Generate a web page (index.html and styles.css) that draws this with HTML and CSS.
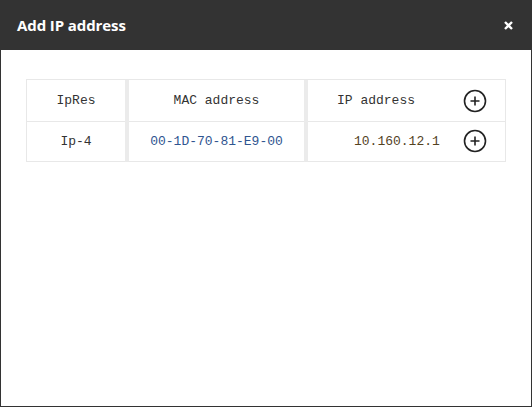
FILE: index.html
```html
<!DOCTYPE html>
<html>
<head>
<meta charset="utf-8">
<link rel="stylesheet" href="styles.css">
</head>
<body>
<div class="dialog">
  <div class="header">
    <span class="title">Add IP address</span>
    <svg class="close" width="9" height="9" viewBox="0 0 9 9"><path d="M1 1 L8 8 M8 1 L1 8" stroke="#fff" stroke-width="2.4" stroke-linecap="butt"/></svg>
  </div>
  <div class="body">
    <div class="grid">
      <div class="cell c1 head">IpRes</div>
      <div class="cell c2 head">MAC address</div>
      <div class="cell c3 head"><span class="ip-head">IP address</span><svg class="plus" width="24" height="24" viewBox="0 0 24 24"><circle cx="12" cy="12" r="10.5" fill="none" stroke="#222" stroke-width="1.6"/><path d="M12 7.5 V16.5 M7.5 12 H16.5" stroke="#222" stroke-width="1.6"/></svg></div>
      <div class="cell c1 row">Ip-4</div>
      <div class="cell c2 row mac">00-1D-70-81-E9-00</div>
      <div class="cell c3 row"><span class="ip-val">10.160.12.1</span><svg class="plus" width="24" height="24" viewBox="0 0 24 24"><circle cx="12" cy="12" r="10.5" fill="none" stroke="#222" stroke-width="1.6"/><path d="M12 7.5 V16.5 M7.5 12 H16.5" stroke="#222" stroke-width="1.6"/></svg></div>
    </div>
  </div>
</div>
</body>
</html>
```
FILE: styles.css
```css
html, body { margin: 0; padding: 0; background: #fff; }
.dialog {
  width: 532px;
  height: 407px;
  box-sizing: border-box;
  border: 1px solid #333;
  border-top: none;
  display: flex;
  flex-direction: column;
}
.header {
  height: 50px;
  background: #333;
  margin: 0 -1px;
  display: flex;
  align-items: center;
  justify-content: space-between;
  padding: 0 19px 0 17px;
  box-sizing: border-box;
}
.title {
  font-family: "Open Sans", sans-serif;
  font-weight: 700;
  font-size: 15px;
  color: #fff;
  letter-spacing: -0.1px;
}
.close { display: block; }
.body {
  flex: 1;
  padding: 29px 25px 0 25px;
}
.grid {
  display: grid;
  grid-template-columns: 98px 179px 201px;
  grid-template-rows: 41px 41px;
  border: 1px solid #e8e8e8;
  border-bottom: none;
  font-family: "Liberation Mono", "Courier New", monospace;
  font-size: 13px;
  color: #333;
}
.cell {
  display: flex;
  align-items: center;
  border-bottom: 1px solid #e8e8e8;
  box-sizing: border-box;
}
.head { height: 42px; }
.c1 { justify-content: center; }
.c2 { justify-content: center; border-left: 4px solid #ebebeb; }
.c3 { border-left: 4px solid #ebebeb; padding-right: 18px; }
.ip-head { padding-left: 29px; }
.ip-val { padding-left: 46px; color: #54431f; }
.mac { color: #2f5590; }
.plus { margin-left: auto; display: block; }
```
